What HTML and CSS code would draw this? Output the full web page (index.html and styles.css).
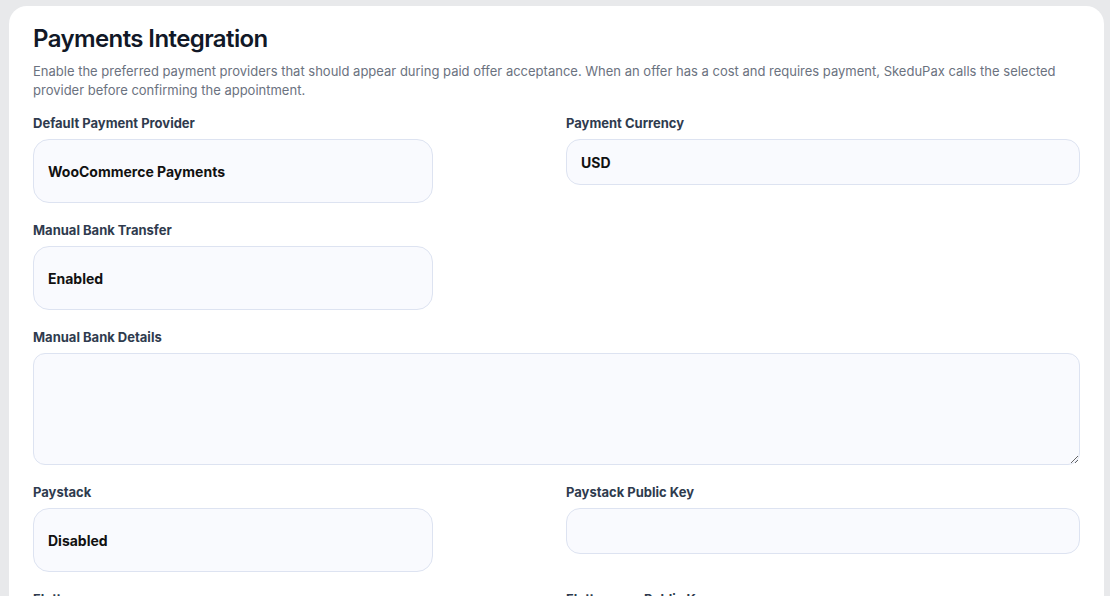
FILE: index.html
```html
<!DOCTYPE html>
<html lang="en">

<head>
    <meta charset="utf-8">
    <meta name="viewport" content="width=device-width, initial-scale=1">
    <title>Payments Integration</title>
    <link rel="stylesheet" href="styles.css">
</head>

<body>
    <div class="card">
        <h2>Payments Integration</h2>
        <p class="intro">Enable the preferred payment providers that should appear during paid offer acceptance. When an offer has a cost and requires payment, SkeduPax calls the selected provider before confirming the appointment.</p>
        <div class="fields">
            <div class="field">
                <label>Default Payment Provider</label>
                <select class="select">
                    <option>WooCommerce Payments</option>
                </select>
            </div>
            <div class="field">
                <label>Payment Currency</label>
                <input class="input" type="text" value="USD">
            </div>
            <div class="field">
                <label>Manual Bank Transfer</label>
                <select class="select">
                    <option>Enabled</option>
                </select>
            </div>
            <div class="field"></div>
            <div class="field wide">
                <label>Manual Bank Details</label>
                <textarea class="textarea"></textarea>
            </div>
            <div class="field">
                <label>Paystack</label>
                <select class="select">
                    <option>Disabled</option>
                </select>
            </div>
            <div class="field">
                <label>Paystack Public Key</label>
                <input class="input" type="text">
            </div>
            <div class="field">
                <label>Flutterwave</label>
                <select class="select">
                    <option>Disabled</option>
                </select>
            </div>
            <div class="field">
                <label>Flutterwave Public Key</label>
                <input class="input" type="text">
            </div>
        </div>
    </div>
</body>

</html>
```

FILE: styles.css
```css
body {
    -webkit-font-smoothing: antialiased;
    font-family: Inter, "Noto Sans", Arial, sans-serif;
    margin: 0;
    padding: 6px 6px 0 9px;
    background: #e8e9eb;
    color: #111827;
}

.card {
    background: #fff;
    border-radius: 18px;
    padding: 18px 24px 24px;
}

h2 {
    font-size: 24px;
    line-height: 30px;
    font-weight: 600;
    margin: 0 0 8px;
    letter-spacing: -0.6px;
}

.intro {
    font-size: 13px;
    line-height: 19px;
    color: #6b7280;
    margin: 0 0 15px;
}

.fields {
    display: grid;
    grid-template-columns: 1fr 1fr;
    column-gap: 19px;
    row-gap: 19px;
}

.field.wide {
    grid-column: 1 / -1;
}

.field label {
    display: block;
    font-size: 13px;
    line-height: 16px;
    font-weight: 700;
    color: #2f3b4e;
    margin-bottom: 8px;
}

.select,
.input,
.textarea {
    display: block;
    box-sizing: border-box;
    width: 100%;
    background: #f9fafe;
    border: 1px solid #dde3f1;
    border-radius: 14px;
    font-family: inherit;
    font-size: 14px;
    font-weight: 700;
    color: #111;
    padding: 0 14px;
    outline: none;
}

.select {
    -webkit-appearance: none;
    appearance: none;
    max-width: 400px;
    height: 64px;
    border-radius: 16px;
}

.input {
    height: 46px;
}

.textarea {
    height: 112px;
    resize: vertical;
    padding: 10px 14px;
    border-radius: 12px;
}
```
